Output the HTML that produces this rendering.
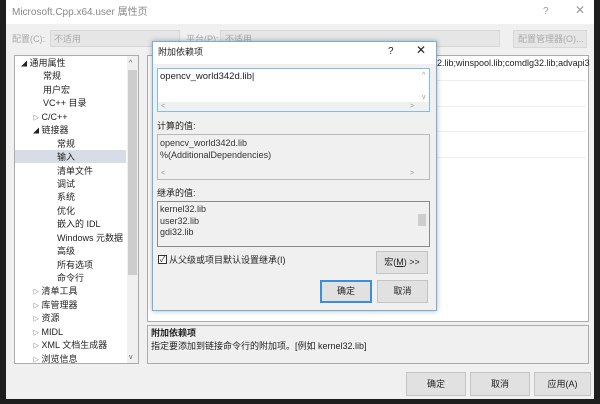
<!DOCTYPE html>
<html><head><meta charset="utf-8"><style>
*{margin:0;padding:0;box-sizing:border-box}
body{width:600px;height:404px;background:#1e1e1e;position:relative;overflow:hidden;font-family:"Liberation Sans","Noto Sans CJK SC",sans-serif;font-size:9px;color:#222}
.a{position:absolute}
.t{position:absolute;white-space:nowrap;line-height:11px}
.tree div{height:13.45px;line-height:13.45px;overflow:visible}
.btn{position:absolute;background:#e1e1e1;border:1px solid #c4c4c4;text-align:center;font-size:9px;color:#222}
</style></head><body>
<div class="a" style="left:6px;top:0;width:588px;height:399px;background:#f0f0f0"></div>
<div class="a" style="left:6px;top:0;width:588px;height:24px;background:#fff"></div>
<div class="t" style="left:12px;top:7px;color:#888;font-size:10px">Microsoft.Cpp.x64.user 属性页</div>
<div class="t" style="left:543px;top:6px;color:#999;font-size:10px">?</div>
<div class="t" style="left:575px;top:5px;color:#999;font-size:12px">✕</div>
<div class="t" style="left:12px;top:34px;color:#aaa">配置(C):</div>
<div class="a" style="left:50px;top:30px;width:130px;height:17px;background:#e6e6e6;border:1px solid #d8d8d8"></div>
<div class="t" style="left:54px;top:34px;color:#aaa">不适用</div>
<div class="t" style="left:186px;top:34px;color:#aaa">平台(P):</div>
<div class="a" style="left:220px;top:30px;width:280px;height:17px;background:#e6e6e6;border:1px solid #d8d8d8"></div>
<div class="t" style="left:225px;top:34px;color:#aaa">不适用</div>
<div class="a" style="left:513px;top:30px;width:74px;height:18px;background:#e6e6e6;border:1px solid #d8d8d8"></div>
<div class="t" style="left:518px;top:34px;color:#aaa">配置管理器(O)...</div>

<div class="a" style="left:14px;top:55px;width:125px;height:309px;background:#fff;border:1px solid #ababab"></div>
<div class="a" style="left:127px;top:56px;width:11px;height:307px;background:#f0f0f0"></div>
<div class="a" style="left:128px;top:70px;width:9px;height:205px;background:#cdcdcd"></div>
<div class="t" style="left:129px;top:58px;font-size:7px;color:#555">^</div>
<div class="t" style="left:129px;top:352px;font-size:7px;color:#555">v</div>
<div class="a" style="left:15px;top:150px;width:111px;height:13px;background:#d8dce6"></div>
<div class="a tree" style="left:21px;top:57px;font-size:9px;white-space:nowrap">
<div><span style="font-size:6px">◢</span> 通用属性</div>
<div style="padding-left:22px">常规</div>
<div style="padding-left:22px">用户宏</div>
<div style="padding-left:22px">VC++ 目录</div>
<div style="padding-left:12px"><span style="font-size:6px">▷</span> C/C++</div>
<div style="padding-left:12px"><span style="font-size:6px">◢</span> 链接器</div>
<div style="padding-left:36px">常规</div>
<div style="padding-left:36px">输入</div>
<div style="padding-left:36px">清单文件</div>
<div style="padding-left:36px">调试</div>
<div style="padding-left:36px">系统</div>
<div style="padding-left:36px">优化</div>
<div style="padding-left:36px">嵌入的 IDL</div>
<div style="padding-left:36px">Windows 元数据</div>
<div style="padding-left:36px">高级</div>
<div style="padding-left:36px">所有选项</div>
<div style="padding-left:36px">命令行</div>
<div style="padding-left:12px"><span style="font-size:6px">▷</span> 清单工具</div>
<div style="padding-left:12px"><span style="font-size:6px">▷</span> 库管理器</div>
<div style="padding-left:12px"><span style="font-size:6px">▷</span> 资源</div>
<div style="padding-left:12px"><span style="font-size:6px">▷</span> MIDL</div>
<div style="padding-left:12px"><span style="font-size:6px">▷</span> XML 文档生成器</div>
<div style="padding-left:12px"><span style="font-size:6px">▷</span> 浏览信息</div>
</div>

<div class="a" style="left:147px;top:55px;width:442px;height:267px;background:#fff;border:1px solid #ababab"></div>
<div class="a" style="left:436px;top:80px;width:150px;height:1px;background:#eee"></div>
<div class="a" style="left:436px;top:106px;width:150px;height:1px;background:#eee"></div>
<div class="a" style="left:436px;top:131px;width:150px;height:1px;background:#eee"></div>
<div class="a" style="left:436px;top:157px;width:150px;height:1px;background:#eee"></div>
<div class="t" style="left:437px;top:58px">2.lib;winspool.lib;comdlg32.lib;advapi3</div>
<div class="a" style="left:147px;top:325px;width:442px;height:39px;border:1px solid #ababab;background:#f0f0f0"></div>
<div class="t" style="left:151px;top:328px;font-weight:bold">附加依赖项</div>
<div class="t" style="left:151px;top:341px">指定要添加到链接命令行的附加项。[例如 kernel32.lib]</div>

<div class="btn" style="left:406px;top:372px;width:60px;height:24px;line-height:22px">确定</div>
<div class="btn" style="left:470px;top:372px;width:60px;height:24px;line-height:22px">取消</div>
<div class="btn" style="left:534px;top:372px;width:57px;height:24px;line-height:22px">应用(A)</div>

<div class="a" style="left:152px;top:41px;width:285px;height:270px;background:#f0f0f0;border:1px solid #6fb3dc;box-shadow:0 0 5px rgba(0,0,0,.3)"></div>
<div class="a" style="left:153px;top:42px;width:283px;height:22px;background:#fff"></div>
<div class="t" style="left:158px;top:47px;font-size:9px">附加依赖项</div>
<div class="t" style="left:388px;top:46px;font-size:10px">?</div>
<div class="t" style="left:416px;top:45px;font-size:12px">✕</div>
<div class="a" style="left:157px;top:68px;width:273px;height:44px;background:#fff;border:1px solid #7fbfe0"></div>
<div class="a" style="left:158px;top:102px;width:271px;height:9px;background:#f0f0f0"></div>
<div class="t" style="left:160px;top:71px;font-size:9.5px">opencv_world342d.lib|</div>
<div class="t" style="left:422px;top:70px;font-size:7px;color:#999">^</div>
<div class="t" style="left:422px;top:92px;font-size:7px;color:#999">v</div>
<div class="t" style="left:161px;top:101px;font-size:7px;color:#999">&lt;</div>
<div class="t" style="left:410px;top:101px;font-size:7px;color:#999">&gt;</div>
<div class="t" style="left:157px;top:121px">计算的值:</div>
<div class="a" style="left:157px;top:134px;width:273px;height:46px;background:#f0f0f0;border:1px solid #b9b9b9"></div>
<div class="t" style="left:160px;top:137px;line-height:12px;color:#333">opencv_world342d.lib<br>%(AdditionalDependencies)</div>
<div class="t" style="left:161px;top:168px;font-size:7px;color:#999">&lt;</div>
<div class="t" style="left:410px;top:168px;font-size:7px;color:#999">&gt;</div>
<div class="t" style="left:157px;top:188px">继承的值:</div>
<div class="a" style="left:157px;top:201px;width:273px;height:46px;background:#f0f0f0;border:1px solid #8a8a8a"></div>
<div class="a" style="left:418px;top:214px;width:8px;height:12px;background:#cdcdcd"></div>
<div class="t" style="left:160px;top:204px;line-height:11.5px;color:#333">kernel32.lib<br>user32.lib<br>gdi32.lib</div>
<div class="a" style="left:158px;top:255px;width:9px;height:9px;border:1px solid #333;background:#fff;font-size:8px;line-height:7px;text-align:center">✓</div>
<div class="t" style="left:169px;top:255px">从父级或项目默认设置继承(I)</div>
<div class="btn" style="left:376px;top:251px;width:52px;height:23px;line-height:21px">宏(<u>M</u>) &gt;&gt;</div>
<div class="btn" style="left:320px;top:280px;width:52px;height:23px;line-height:19px;border:2px solid #3c8fd6">确定</div>
<div class="btn" style="left:377px;top:280px;width:51px;height:23px;line-height:21px">取消</div>
</body></html>
